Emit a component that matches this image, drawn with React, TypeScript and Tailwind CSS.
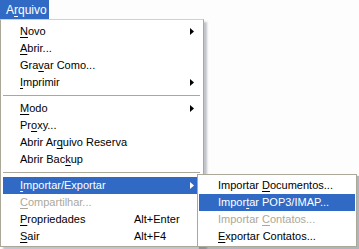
import type { ReactNode } from 'react';

type Row =
  | { kind: 'sep' }
  | {
      kind: 'item';
      pre: string;
      key: string;
      post: string;
      shortcut?: string;
      arrow?: boolean;
      active?: boolean;
      disabled?: boolean;
    };

const mainRows: Row[] = [
  { kind: 'item', pre: '', key: 'N', post: 'ovo', arrow: true },
  { kind: 'item', pre: '', key: 'A', post: 'brir...' },
  { kind: 'item', pre: 'Gra', key: 'v', post: 'ar Como...' },
  { kind: 'item', pre: '', key: 'I', post: 'mprimir', arrow: true },
  { kind: 'sep' },
  { kind: 'item', pre: '', key: 'M', post: 'odo', arrow: true },
  { kind: 'item', pre: 'Pr', key: 'o', post: 'xy...' },
  { kind: 'item', pre: 'Abrir Ar', key: 'q', post: 'uivo Reserva' },
  { kind: 'item', pre: 'Abrir Bac', key: 'k', post: 'up' },
  { kind: 'sep' },
  { kind: 'item', pre: '', key: 'I', post: 'mportar/Exportar', arrow: true, active: true },
  { kind: 'item', pre: '', key: 'C', post: 'ompartilhar...', disabled: true },
  { kind: 'item', pre: '', key: 'P', post: 'ropriedades', shortcut: 'Alt+Enter' },
  { kind: 'item', pre: '', key: 'S', post: 'air', shortcut: 'Alt+F4' },
];

const subRows: Row[] = [
  { kind: 'item', pre: 'Importar ', key: 'D', post: 'ocumentos...' },
  { kind: 'item', pre: 'Impor', key: 't', post: 'ar POP3/IMAP...', active: true },
  { kind: 'item', pre: 'Importar ', key: 'C', post: 'ontatos...', disabled: true },
  { kind: 'item', pre: '', key: 'E', post: 'xportar Contatos...' },
];

function Arrow({ white }: { white?: boolean }) {
  return (
    <svg width="4" height="7" viewBox="0 0 4 7" className="shrink-0">
      <polygon points="0,0 4,3.5 0,7" fill={white ? '#ffffff' : '#000000'} />
    </svg>
  );
}

function MenuRows({ rows, pl, shortcutAt }: { rows: Row[]; pl: string; shortcutAt?: string }) {
  return (
    <>
      {rows.map((r, i) => {
        if (r.kind === 'sep') {
          return (
            <div key={i} className="h-[9px] flex items-center">
              <div className="h-px w-full bg-[#aca899] mr-[2px]" />
            </div>
          );
        }
        const color = r.active ? 'bg-[#316ac5] text-white' : r.disabled ? 'text-[#aca899]' : 'text-black';
        const label: ReactNode = (
          <span className="whitespace-pre">
            {r.pre}
            <span className="underline underline-offset-[2px]">{r.key}</span>
            {r.post}
          </span>
        );
        return (
          <div key={i} className={`h-[17px] flex items-center ${pl} pr-[8px] ${color}`}>
            <div className={shortcutAt ?? 'flex-1'}>{label}</div>
            {r.shortcut && <div className="flex-1">{r.shortcut}</div>}
            {!r.shortcut && shortcutAt && <div className="flex-1" />}
            {r.arrow && <Arrow white={r.active} />}
          </div>
        );
      })}
    </>
  );
}

export default function App() {
  return (
    <div className="relative w-[359px] h-[249px] overflow-hidden bg-[#fdfdfd] font-['Liberation_Sans',sans-serif] text-[11px] leading-none">
      {/* menu bar tab */}
      <div className="w-[49px] h-[19px] bg-[#316ac5] text-white flex items-center pl-[6px] text-[12px]">
        <span>
          A<span className="underline underline-offset-[2px]">r</span>quivo
        </span>
      </div>

      {/* main dropdown */}
      <div className="absolute left-0 top-[19px] w-[204px] bg-white border border-[#aca899] border-t-[#d6d0bc] pt-[3px] pb-[1px] pl-[2px] pr-[1px] shadow-[3px_3px_2px_rgba(80,90,110,0.35)]">
        <MenuRows rows={mainRows} pl="pl-[17px]" shortcutAt="w-[114px] shrink-0" />
      </div>

      {/* submenu */}
      <div className="absolute left-[197px] top-[174px] w-[160px] bg-white border border-[#aca899] pt-[2px] pb-[1px] pl-[1px] pr-[1px] shadow-[2px_2px_1px_rgba(60,70,90,0.4)]">
        <MenuRows rows={subRows} pl="pl-[19px]" />
      </div>
    </div>
  );
}
